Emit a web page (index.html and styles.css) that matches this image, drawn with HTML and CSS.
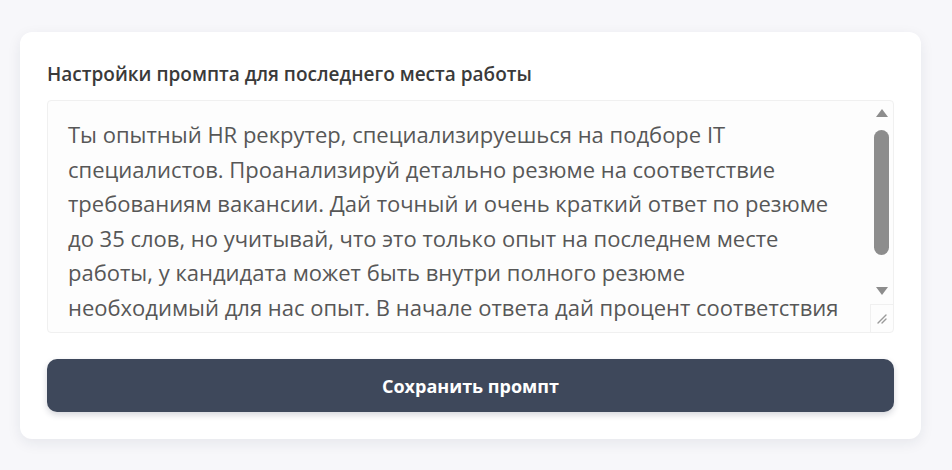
FILE: index.html
```html
<!DOCTYPE html>
<html lang="ru">
<head>
<meta charset="utf-8">
<title>Настройки промпта</title>
<link rel="stylesheet" href="styles.css">
</head>
<body>
<div class="page">
  <section class="card">
    <label class="label" for="prompt">Настройки промпта для последнего места работы</label>
    <div class="field">
      <textarea id="prompt" class="area">Ты опытный HR рекрутер, специализируешься на подборе IT
специалистов. Проанализируй детально резюме на соответствие
требованиям вакансии. Дай точный и очень краткий ответ по резюме
до 35 слов, но учитывай, что это только опыт на последнем месте
работы, у кандидата может быть внутри полного резюме
необходимый для нас опыт. В начале ответа дай процент соответствия
кандидата вакансии от 0% до 100%, а затем краткий вывод.</textarea>
      <div class="scroll">
        <svg class="arrow up" width="14" height="10" viewBox="0 0 14 10"><path d="M7 1 L13 9 L1 9 Z" fill="#8d8d8d"/></svg>
        <div class="thumb"></div>
        <div class="spacer"></div>
        <svg class="arrow down" width="14" height="10" viewBox="0 0 14 10"><path d="M1 1 L13 1 L7 9 Z" fill="#8d8d8d"/></svg>
        <div class="resize">
          <svg width="12" height="12" viewBox="0 0 12 12"><path d="M2 10 L10 2 M6 10 L10 6" stroke="#9a9a9a" stroke-width="1.4" stroke-linecap="round"/></svg>
        </div>
      </div>
    </div>
    <button class="save" type="button">Сохранить промпт</button>
  </section>
</div>
</body>
</html>
```

FILE: styles.css
```css
* { box-sizing: border-box; }
html, body {
  margin: 0;
  padding: 0;
  background: #f7f7fa;
  font-family: "Open Sans", "Noto Sans", sans-serif;
}
.page {
  padding: 32px 31px 30px 20px;
}
.card {
  background: #ffffff;
  border-radius: 12px;
  box-shadow: 0 4px 14px rgba(30, 35, 60, 0.08);
  padding: 29px 27px 27px 27px;
  display: flex;
  flex-direction: column;
}
.label {
  font-size: 19px;
  font-weight: 600;
  color: #3a3a3a;
  line-height: 26px;
  margin-bottom: 13px;
}
.field {
  display: flex;
  height: 233px;
  border: 1px solid #f0f0f0;
  border-radius: 4px;
  background: #fdfdfd;
}
.area {
  flex: 1;
  border: none;
  outline: none;
  resize: none;
  overflow: hidden;
  white-space: pre-wrap;
  background: transparent;
  padding: 16px 6px 0 20px;
  font-family: "Open Sans", "Noto Sans", sans-serif;
  font-size: 22px;
  line-height: 34.5px;
  color: #575757;
}
.scroll {
  width: 23px;
  display: flex;
  flex-direction: column;
  align-items: center;
  padding-top: 7px;
}
.arrow { display: block; flex: none; }
.thumb {
  margin-top: 12px;
  width: 15px;
  height: 125px;
  border-radius: 8px;
  background: #8d8d8d;
  flex: none;
}
.spacer { flex: 1; }
.down { margin-bottom: 8px; }
.resize {
  width: 23px;
  height: 28px;
  border-left: 1px solid #f0f0f0;
  border-top: 1px solid #f0f0f0;
  display: flex;
  align-items: center;
  justify-content: center;
}
.save {
  margin-top: 26px;
  height: 53px;
  border: none;
  border-radius: 10px;
  background: #3e485b;
  color: #ffffff;
  font-family: "Open Sans", "Noto Sans", sans-serif;
  font-size: 18px;
  font-weight: 700;
  box-shadow: 0 3px 6px rgba(30, 35, 60, 0.18);
}
```
